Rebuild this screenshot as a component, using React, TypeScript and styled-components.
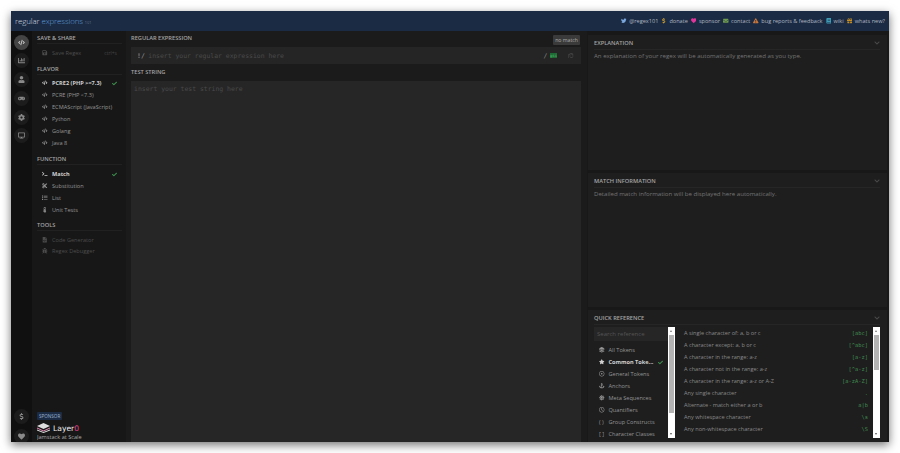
import React from "react";
import styled, { createGlobalStyle } from "styled-components";
import {
  FaTwitter,
  FaDollarSign,
  FaHeart,
  FaEnvelope,
  FaExclamationTriangle,
  FaBook,
  FaGift,
  FaCode,
  FaChartBar,
  FaUser,
  FaGamepad,
  FaCog,
  FaDesktop,
  FaSave,
  FaCheck,
  FaTerminal,
  FaCut,
  FaList,
  FaThermometerHalf,
  FaFileCode,
  FaBug,
  FaRegCopy,
  FaStar,
  FaLayerGroup,
  FaAnchor,
  FaRegDotCircle,
  FaSun,
  FaRegClock,
  FaChevronDown,
} from "react-icons/fa";

const GlobalStyle = createGlobalStyle`
  html, body {
    margin: 0;
    background: #fff;
  }
  * { box-sizing: border-box; }
`;

const Page = styled.div`
  width: 900px;
  height: 453px;
  padding: 11px;
  overflow: hidden;
  font-family: "Open Sans", "Liberation Sans", sans-serif;
`;

const Window = styled.div`
  width: 878px;
  height: 431px;
  display: flex;
  flex-direction: column;
  background: #1a1a1a;
  box-shadow: 0 3px 9px rgba(0, 0, 0, 0.55);
  overflow: hidden;
`;

const Header = styled.header`
  height: 20px;
  flex: none;
  display: flex;
  align-items: center;
  justify-content: space-between;
  padding: 0 4px;
  background: #1b2b44;
`;

const Logo = styled.div`
  font-size: 7.9px;
  font-weight: 300;
  color: #d5dbe3;
  letter-spacing: -0.1px;
  span { color: #5f9fdc; }
  small { font-size: 4px; color: #8a97a8; margin-left: 2px; }
`;

const TopNav = styled.nav`
  display: flex;
  align-items: center;
  gap: 3px;
`;

const TopLink = styled.span<{ $icon: string }>`
  display: flex;
  align-items: center;
  gap: 2.5px;
  font-size: 5.6px;
  color: #aeb6c0;
  svg { color: ${(p) => p.$icon}; width: 5.5px; height: 5.5px; }
`;

const Body = styled.div`
  flex: 1;
  min-height: 0;
  display: flex;
`;

const Rail = styled.aside`
  width: 21px;
  flex: none;
  background: #101010;
  display: flex;
  flex-direction: column;
  align-items: center;
  padding: 3.5px 0 0;
  overflow: hidden;
`;

const RailButton = styled.div<{ $active?: boolean }>`
  width: 15px;
  height: 15px;
  flex: none;
  margin-bottom: 3.8px;
  border-radius: 50%;
  display: flex;
  align-items: center;
  justify-content: center;
  background: ${(p) => (p.$active ? "#444" : "#1c1c1c")};
  color: ${(p) => (p.$active ? "#c8c8c8" : "#8a8a8a")};
  svg { width: 7px; height: 7px; }
`;

const RailFoot = styled.div`
  margin-top: auto;
  margin-bottom: -1.5px;
  display: flex;
  flex-direction: column;
  align-items: center;
  gap: 5px;
  & > div { margin-bottom: 0; }
`;

const Sidebar = styled.aside`
  width: 94px;
  flex: none;
  background: #171717;
  padding: 2.5px 4px 0 5px;
  display: flex;
  flex-direction: column;
  overflow: hidden;
`;

const SectionTitle = styled.div<{ $top?: number }>`
  height: 10px;
  flex: none;
  line-height: 9px;
  font-size: 5.7px;
  font-weight: 600;
  color: #a5a5a5;
  margin-top: ${(p) => p.$top ?? 0}px;
  border-bottom: 1px solid #212121;
`;

const Item = styled.div<{ $active?: boolean; $muted?: boolean; $h?: number }>`
  height: ${(p) => p.$h ?? 12}px;
  flex: none;
  display: flex;
  align-items: center;
  padding-left: 5px;
  padding-right: 5px;
  font-size: 5.6px;
  font-weight: ${(p) => (p.$active ? 700 : 400)};
  color: ${(p) => (p.$active ? "#d0d0d0" : p.$muted ? "#4c4c4c" : "#959595")};
  svg.lead { width: 5.5px; height: 5.5px; margin-right: 4.5px; flex: none; }
  span { flex: 1; white-space: nowrap; }
  svg.check { width: 5px; height: 5px; color: #3d8f4d; }
  em { font-style: normal; font-size: 5px; color: #444; }
`;

const ItemList = styled.div<{ $top: number }>`
  margin-top: ${(p) => p.$top}px;
  display: flex;
  flex-direction: column;
  flex: none;
`;

const Sponsor = styled.div`
  margin-top: auto;
  height: 30px;
  overflow: hidden;
  flex: none;
`;

const SponsorTag = styled.div`
  width: fit-content;
  height: 8px;
  line-height: 8px;
  padding: 0 2px;
  font-size: 4.6px;
  color: #9fb5cf;
  background: #1b2b44;
  border-radius: 1px;
`;

const SponsorLogo = styled.div`
  display: flex;
  align-items: center;
  gap: 3px;
  margin-top: 3px;
  height: 10px;
  font-family: "DejaVu Sans", sans-serif;
  font-size: 7.6px;
  color: #eee;
  b { color: #e8408f; font-weight: 400; margin-left: -3px; }
`;

const SponsorText = styled.div`
  font-size: 5.6px;
  line-height: 9px;
  color: #aaa;
`;

const Main = styled.main`
  width: 461px;
  flex: none;
  padding: 0 6px 0 5px;
  background: #1b1b1b;
  display: flex;
  flex-direction: column;
`;

const MainLabelRow = styled.div`
  position: relative;
  height: 16px;
  flex: none;
  padding-top: 2px;
  font-size: 5.7px;
  font-weight: 600;
  color: #a5a5a5;
  line-height: 10px;
`;

const NoMatch = styled.div`
  position: absolute;
  right: 1px;
  top: 4px;
  height: 10px;
  line-height: 10px;
  padding: 0 2px;
  font-size: 5.2px;
  font-weight: 400;
  color: #aaa;
  background: #3a3a3a;
  border-radius: 1px;
`;

const RegexBox = styled.div`
  height: 17px;
  flex: none;
  display: flex;
  align-items: center;
  padding: 0 7.5px 0 6px;
  background: #252525;
  font-family: "DejaVu Sans Mono", "Liberation Mono", monospace;
  font-size: 6.45px;
  color: #4a4a4a;
`;

const Delim = styled.span`
  color: #888;
  margin-right: 3.5px;
  font-weight: 700;
`;

const Grow = styled.span`
  flex: 1;
`;

const Flags = styled.span`
  margin-right: 11px;
  color: #888;
  display: flex;
  align-items: center;
  gap: 2.5px;
  b {
    height: 5px;
    line-height: 5px;
    background: #1e6a34;
    color: #4fb468;
    font-size: 3.9px;
    font-weight: 400;
  }
`;

const CopyIcon = styled(FaRegCopy)`
  width: 5.5px;
  height: 5.5px;
  color: #4c4c4c;
`;

const TestLabel = styled(MainLabelRow)`
  height: 17px;
  padding-top: 3px;
`;

const TestBox = styled.div`
  flex: 1;
  padding: 4px 3px;
  background: #262626;
  font-family: "DejaVu Sans Mono", "Liberation Mono", monospace;
  font-size: 6.45px;
  line-height: 8px;
  color: #4a4a4a;
`;

const Right = styled.div`
  flex: 1;
  min-width: 0;
  display: flex;
  flex-direction: column;
  background: #181818;
  padding: 4px 2px 0 1px;
`;

const Panel = styled.section<{ $h?: number }>`
  ${(p) => (p.$h ? `height: ${p.$h}px;` : "flex: 1; min-height: 0;")}
  flex-shrink: 0;
  background: #1e1e1e;
  padding: 0 7px 0 6px;
  margin-bottom: 3px;
  &:last-child { margin-bottom: 0; flex-shrink: 1; }
`;

const PanelHead = styled.div`
  height: 15px;
  padding-top: 1px;
  display: flex;
  align-items: center;
  justify-content: space-between;
  font-size: 5.7px;
  font-weight: 600;
  color: #a5a5a5;
  border-bottom: 1px solid #262626;
  svg { width: 6px; height: 6px; color: #4a4a4a; }
`;

const PanelText = styled.div`
  margin-top: 0.5px;
  font-size: 6.1px;
  line-height: 9px;
  color: #757575;
`;

const QuickBody = styled.div`
  display: flex;
  margin-top: 2px;
  height: 111px;
  overflow: hidden;
`;

const QuickNav = styled.div`
  width: 74px;
  flex: none;
  display: flex;
  flex-direction: column;
  overflow: hidden;
  svg.lead { margin-right: 4px; }
`;

const SearchBox = styled.div`
  height: 14px;
  flex: none;
  line-height: 14px;
  padding-left: 3px;
  background: #262626;
  font-size: 6px;
  color: #555;
  margin-bottom: 3px;
`;

const Scrollbar = styled.div<{ $thumb: number }>`
  width: 7px;
  flex: none;
  height: 111px;
  background: #fff;
  position: relative;
  &::before {
    content: "";
    position: absolute;
    left: 1px;
    right: 1px;
    top: 8px;
    height: ${(p) => p.$thumb}px;
    background: #b4b4b4;
  }
  &::after {
    content: "";
    position: absolute;
    left: 2px;
    bottom: 3px;
    border-left: 1.5px solid transparent;
    border-right: 1.5px solid transparent;
    border-top: 2px solid #555;
  }
`;

const ScrollUp = styled.i`
  position: absolute;
  left: 2px;
  top: 3px;
  border-left: 1.5px solid transparent;
  border-right: 1.5px solid transparent;
  border-bottom: 2px solid #777;
`;

const Refs = styled.div`
  flex: 1;
  min-width: 0;
  padding: 0 5px 0 9px;
`;

const Ref = styled.div`
  height: 12px;
  display: flex;
  align-items: center;
  justify-content: space-between;
  font-size: 5.6px;
  color: #8a8a8a;
  code {
    font-family: "DejaVu Sans Mono", "Liberation Mono", monospace;
    font-size: 5.4px;
    color: #3f8a50;
  }
`;

const BracketIcon = styled.i`
  width: 5.5px;
  margin-right: 4px;
  font-style: normal;
  font-size: 5.6px;
  white-space: nowrap;
  flex: none;
`;

const tokens = [
  { label: "All Tokens", icon: <FaLayerGroup className="lead" /> },
  { label: "Common Toke...", icon: <FaStar className="lead" />, active: true },
  { label: "General Tokens", icon: <FaRegDotCircle className="lead" /> },
  { label: "Anchors", icon: <FaAnchor className="lead" /> },
  { label: "Meta Sequences", icon: <FaSun className="lead" /> },
  { label: "Quantifiers", icon: <FaRegClock className="lead" /> },
  { label: "Group Constructs", icon: <BracketIcon>( )</BracketIcon> },
  { label: "Character Classes", icon: <BracketIcon>[ ]</BracketIcon> },
];

const refs = [
  ["A single character of: a, b or c", "[abc]"],
  ["A character except: a, b or c", "[^abc]"],
  ["A character in the range: a-z", "[a-z]"],
  ["A character not in the range: a-z", "[^a-z]"],
  ["A character in the range: a-z or A-Z", "[a-zA-Z]"],
  ["Any single character", "."],
  ["Alternate - match either a or b", "a|b"],
  ["Any whitespace character", "\\s"],
  ["Any non-whitespace character", "\\S"],
];

const LayerMark = () => (
  <svg width="13" height="10" viewBox="0 0 13 10">
    <path d="M6.5 0L13 3L6.5 6L0 3Z" fill="#ddd" />
    <path d="M0 4.5L6.5 7.5L13 4.5V5.5L6.5 8.5L0 5.5Z" fill="#e58ab5" />
    <path d="M0 6.5L6.5 9L13 6.5V7.5L6.5 10L0 7.5Z" fill="#ddd" />
  </svg>
);

export default function App() {
  return (
    <Page>
      <GlobalStyle />
      <Window>
        <Header>
          <Logo>
            regular <span>expressions</span>
            <small>101</small>
          </Logo>
          <TopNav>
            <TopLink $icon="#7aa7dc"><FaTwitter />@regex101</TopLink>
            <TopLink $icon="#d9a52c"><FaDollarSign />donate</TopLink>
            <TopLink $icon="#e0359b"><FaHeart />sponsor</TopLink>
            <TopLink $icon="#6f9b4f"><FaEnvelope />contact</TopLink>
            <TopLink $icon="#c9763a"><FaExclamationTriangle />bug reports &amp; feedback</TopLink>
            <TopLink $icon="#3f9cb5"><FaBook />wiki</TopLink>
            <TopLink $icon="#c78f23"><FaGift />whats new?</TopLink>
          </TopNav>
        </Header>
        <Body>
          <Rail>
            <RailButton $active><FaCode /></RailButton>
            <RailButton><FaChartBar /></RailButton>
            <RailButton><FaUser /></RailButton>
            <RailButton><FaGamepad /></RailButton>
            <RailButton><FaCog /></RailButton>
            <RailButton><FaDesktop /></RailButton>
            <RailFoot>
              <RailButton><FaDollarSign /></RailButton>
              <RailButton><FaHeart /></RailButton>
            </RailFoot>
          </Rail>
          <Sidebar>
            <SectionTitle>SAVE &amp; SHARE</SectionTitle>
            <ItemList $top={3.5}>
              <Item $muted><FaSave className="lead" /><span>Save Regex</span><em>ctrl+s</em></Item>
            </ItemList>
            <SectionTitle $top={5.5}>FLAVOR</SectionTitle>
            <ItemList $top={2.5}>
              <Item $active><FaCode className="lead" /><span>PCRE2 (PHP &gt;=7.3)</span><FaCheck className="check" /></Item>
              <Item><FaCode className="lead" /><span>PCRE (PHP &lt;7.3)</span></Item>
              <Item><FaCode className="lead" /><span>ECMAScript (JavaScript)</span></Item>
              <Item><FaCode className="lead" /><span>Python</span></Item>
              <Item><FaCode className="lead" /><span>Golang</span></Item>
              <Item><FaCode className="lead" /><span>Java 8</span></Item>
            </ItemList>
            <SectionTitle $top={5.5}>FUNCTION</SectionTitle>
            <ItemList $top={3.5}>
              <Item $active><FaTerminal className="lead" /><span>Match</span><FaCheck className="check" /></Item>
              <Item><FaCut className="lead" /><span>Substitution</span></Item>
              <Item><FaList className="lead" /><span>List</span></Item>
              <Item><FaThermometerHalf className="lead" /><span>Unit Tests</span></Item>
            </ItemList>
            <SectionTitle $top={4.5}>TOOLS</SectionTitle>
            <ItemList $top={4}>
              <Item $muted $h={11}><FaFileCode className="lead" /><span>Code Generator</span></Item>
              <Item $muted $h={11}><FaBug className="lead" /><span>Regex Debugger</span></Item>
            </ItemList>
            <Sponsor>
              <SponsorTag>SPONSOR</SponsorTag>
              <SponsorLogo><LayerMark />Layer<b>0</b></SponsorLogo>
              <SponsorText>Jamstack at Scale</SponsorText>
            </Sponsor>
          </Sidebar>
          <Main>
            <MainLabelRow>
              REGULAR EXPRESSION
              <NoMatch>no match</NoMatch>
            </MainLabelRow>
            <RegexBox>
              <Delim>!/</Delim>
              <Grow>insert your regular expression here</Grow>
              <Flags>/<b>gsi</b></Flags>
              <CopyIcon />
            </RegexBox>
            <TestLabel>TEST STRING</TestLabel>
            <TestBox>insert your test string here</TestBox>
          </Main>
          <Right>
            <Panel $h={135}>
              <PanelHead>EXPLANATION<FaChevronDown /></PanelHead>
              <PanelText>An explanation of your regex will be automatically generated as you type.</PanelText>
            </Panel>
            <Panel $h={134}>
              <PanelHead>MATCH INFORMATION<FaChevronDown /></PanelHead>
              <PanelText>Detailed match information will be displayed here automatically.</PanelText>
            </Panel>
            <Panel>
              <PanelHead>QUICK REFERENCE<FaChevronDown /></PanelHead>
              <QuickBody>
                <QuickNav>
                  <SearchBox>Search reference</SearchBox>
                  {tokens.map((t) => (
                    <Item key={t.label} $active={t.active}>
                      {t.icon}
                      <span>{t.label}</span>
                      {t.active && <FaCheck className="check" />}
                    </Item>
                  ))}
                </QuickNav>
                <Scrollbar $thumb={78}><ScrollUp /></Scrollbar>
                <Refs>
                  {refs.map(([text, code]) => (
                    <Ref key={code}>
                      {text}
                      <code>{code}</code>
                    </Ref>
                  ))}
                </Refs>
                <Scrollbar $thumb={35}><ScrollUp /></Scrollbar>
              </QuickBody>
            </Panel>
          </Right>
        </Body>
      </Window>
    </Page>
  );
}
